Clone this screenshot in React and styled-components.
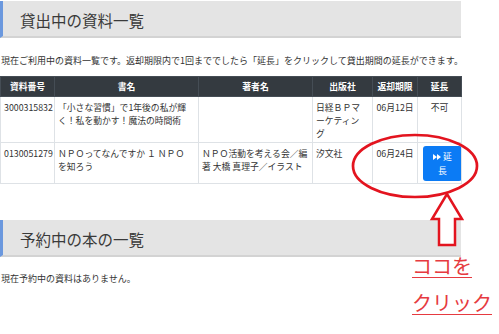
import React from 'react'
import styled, { createGlobalStyle } from 'styled-components'

const GlobalStyle = createGlobalStyle`
  body {
    margin: 0;
    background: #fff;
    font-family: "Noto Sans CJK JP", "Noto Sans", sans-serif;
    color: #212529;
  }
`

const Page = styled.div`
  position: relative;
  width: 499px;
  height: 334px;
  overflow: hidden;
`

const Content = styled.div`
  width: 461px;
  padding-top: 1px;
`

const SectionTitle = styled.h2`
  margin: ${p => p.$top || 0}px 0 0;
  height: 37px;
  box-sizing: border-box;
  background: #e4e4e4;
  border-left: 3px solid #6b98de;
  border-bottom: 2px solid #d3d3d3;
  padding: 3px 0 0 17px;
  font-size: 15.5px;
  font-weight: 400;
  line-height: 32px;
  color: #3a3a3a;
`

const Lead = styled.p`
  margin: ${p => p.$top}px 0 ${p => p.$bottom || 0}px 1px;
  font-size: 9px;
  line-height: 14px;
  color: #333;
  white-space: nowrap;
`

const Table = styled.table`
  width: 461px;
  border-collapse: collapse;
  table-layout: fixed;
`

const Th = styled.th`
  background: #343a40;
  color: #fff;
  font-weight: 700;
  font-size: 8.8px;
  line-height: 13px;
  padding: 3px;
  border: 1px solid #454d55;
  text-align: center;
  white-space: nowrap;
`

const Td = styled.td`
  font-size: 8.8px;
  line-height: 13px;
  padding: 4px 3px 2px;
  border: 1px solid #dee2e6;
  vertical-align: top;
  text-align: ${p => p.$align || 'left'};
  color: #333;
`

const ExtendButton = styled.button`
  display: block;
  margin: -1px auto 0 2px;
  width: 39px;
  height: 35px;
  box-sizing: border-box;
  padding: 4px 6px 3px;
  border: none;
  border-radius: 3px;
  background: #0b7bf5;
  color: #fff;
  font-family: inherit;
  font-size: 8.8px;
  line-height: 14px;
  text-align: center;
`

const ForwardIcon = styled.svg`
  width: 8px;
  height: 6px;
  margin-right: 2px;
  vertical-align: 0;
`

const Overlay = styled.svg`
  position: absolute;
  left: 0;
  top: 0;
  pointer-events: none;
`

const Note = styled.div`
  position: absolute;
  left: 412px;
  top: 247px;
  font-size: 20px;
  line-height: 37px;
  color: #e63a40;
  text-decoration: underline;
  text-decoration-thickness: 1px;
  text-underline-offset: 3px;
`

const loans = [
  {
    id: '3000315832',
    title: ['「小さな習慣」で1年後の私が輝', 'く！私を動かす！魔法の時間術'],
    author: [],
    publisher: ['日経ＢＰマ', 'ーケティン', 'グ'],
    due: '06月12日',
    canExtend: false,
  },
  {
    id: '0130051279',
    title: ['ＮＰＯってなんですか １ ＮＰＯ', 'を知ろう'],
    author: ['ＮＰＯ活動を考える会／編', '著 大橋 真理子／イラスト'],
    publisher: ['汐文社'],
    due: '06月24日',
    canExtend: true,
  },
]

const Lines = ({ lines }) =>
  lines.map((l, i) => (
    <React.Fragment key={i}>
      {i > 0 && <br />}
      {l}
    </React.Fragment>
  ))

export default function App() {
  return (
    <Page>
      <GlobalStyle />
      <Content>
        <SectionTitle>貸出中の資料一覧</SectionTitle>
        <Lead $top={16} $bottom={8}>
          現在ご利用中の資料一覧です。返却期限内で1回まででしたら「延長」をクリックして貸出期間の延長ができます。
        </Lead>
        <Table>
          <colgroup>
            <col style={{ width: 54 }} />
            <col style={{ width: 144 }} />
            <col style={{ width: 114 }} />
            <col style={{ width: 60 }} />
            <col style={{ width: 45 }} />
            <col style={{ width: 44 }} />
          </colgroup>
          <thead>
            <tr>
              <Th>資料番号</Th>
              <Th>書名</Th>
              <Th>著者名</Th>
              <Th>出版社</Th>
              <Th>返却期限</Th>
              <Th>延長</Th>
            </tr>
          </thead>
          <tbody>
            {loans.map(row => (
              <tr key={row.id}>
                <Td $align="center">{row.id}</Td>
                <Td><Lines lines={row.title} /></Td>
                <Td><Lines lines={row.author} /></Td>
                <Td><Lines lines={row.publisher} /></Td>
                <Td $align="center">{row.due}</Td>
                <Td $align="center">
                  {row.canExtend ? (
                    <ExtendButton>
                      <ForwardIcon viewBox="0 0 16 12">
                        <path d="M0 0 L8 6 L0 12 Z M8 0 L16 6 L8 12 Z" fill="#fff" />
                      </ForwardIcon>
                      延長
                    </ExtendButton>
                  ) : (
                    '不可'
                  )}
                </Td>
              </tr>
            ))}
          </tbody>
        </Table>
        <SectionTitle $top={36}>予約中の本の一覧</SectionTitle>
        <Lead $top={15}>現在予約中の資料はありません。</Lead>
      </Content>

      <Overlay width="499" height="334" viewBox="0 0 499 334">
        <ellipse cx="415" cy="166" rx="62" ry="31" fill="none" stroke="#e3141f" strokeWidth="2.7" />
        <polygon
          points="447,194 462,219 455,219 455,245 439,245 439,219 432,219"
          fill="#fff"
          stroke="#e3141f"
          strokeWidth="2.5"
          strokeLinejoin="miter"
        />
      </Overlay>
      <Note>
        ココを
        <br />
        クリック
      </Note>
    </Page>
  )
}
